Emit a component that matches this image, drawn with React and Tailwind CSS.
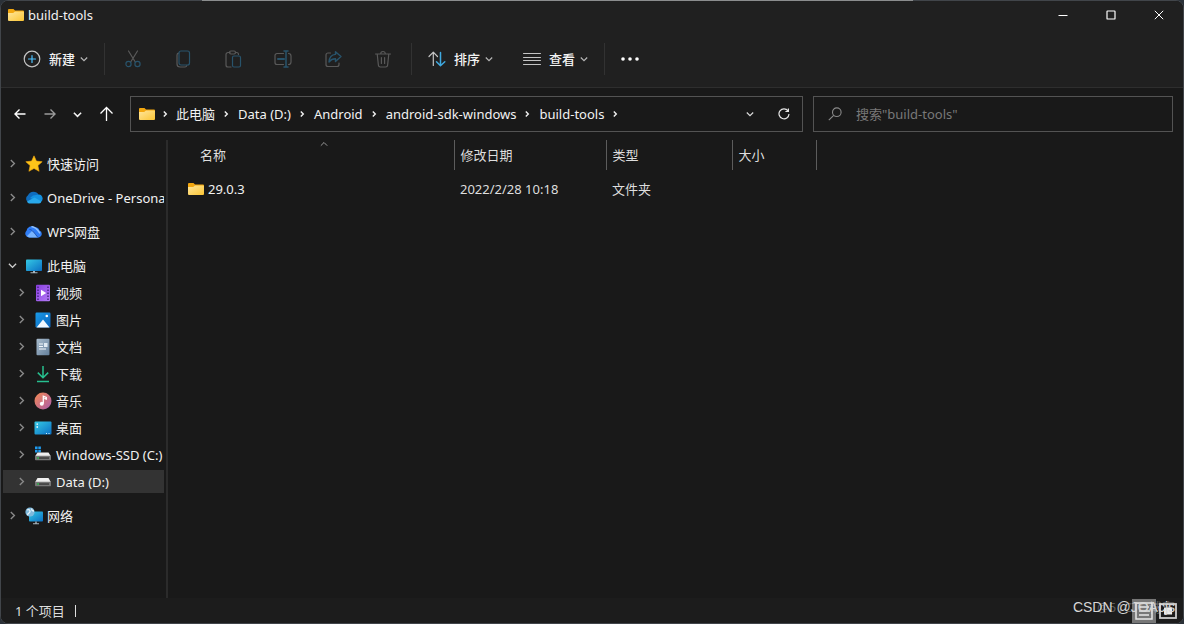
import React from "react";

const Chevron = ({ dir = "right", size = 8, className = "", width = 1.2 }) => {
  const d = {
    right: "M2.5 0.8L5.7 4L2.5 7.2",
    down: "M0.8 2.5L4 5.7L7.2 2.5",
    up: "M0.8 5.7L4 2.5L7.2 5.7",
  }[dir];
  return (
    <svg width={size} height={size} viewBox="0 0 8 8" fill="none" stroke="currentColor" strokeWidth={width} className={`shrink-0 ${className}`} aria-hidden="true">
      <path d={d} />
    </svg>
  );
};

const CrumbArrow = ({ className }) => (
  <svg width="8" height="8" viewBox="0 0 8 8" fill="none" stroke="currentColor" strokeWidth="1.4" className={`shrink-0 ${className}`} aria-hidden="true">
    <path d="M2.8 1.5L5.3 4L2.8 6.500" />
  </svg>
);

const Folder = () => (
  <svg width="16" height="14" viewBox="0 0 16 14" className="shrink-0" aria-hidden="true">
    <defs>
      <linearGradient id="fold" x1="0" y1="0" x2="1" y2="1">
        <stop offset="0" stopColor="#ffe69c" />
        <stop offset="1" stopColor="#fbc534" />
      </linearGradient>
    </defs>
    <path d="M0 2a1 1 0 0 1 1-1h4.5L7 2.5h8a1 1 0 0 1 1 1V6H0z" fill="#f3a70f" />
    <path d="M0 5h5.2L7 3.5h8.2a.8.8 0 0 1 .8.8V12a1 1 0 0 1-1 1H1a1 1 0 0 1-1-1z" fill="url(#fold)" />
  </svg>
);

const Ico = ({ children, size = 18 }) => (
  <svg width={size} height={size} viewBox="0 0 18 18" fill="none" strokeWidth="1.2" strokeLinecap="round" strokeLinejoin="round" className="shrink-0" aria-hidden="true">
    {children}
  </svg>
);

const G = "#595959";
const B = "#28536b";

const tools = [
  ["剪切", <Ico><path stroke={G} d="M4.5 1l6.8 11M13.5 1L6.7 12" /><circle cx="4.5" cy="14" r="2.6" stroke={B} /><circle cx="13.5" cy="14" r="2.6" stroke={B} /></Ico>],
  ["复制", <Ico><path stroke={G} d="M4.5 3.2A2 2 0 0 0 3 5v9a3 3 0 0 0 3 3h5a2 2 0 0 0 1.8-1.4" /><rect x="5" y="1" width="10.5" height="14" rx="2" stroke={B} /></Ico>],
  ["粘贴", <Ico><path stroke={G} d="M6 2.5H4a2 2 0 0 0-2 2V15a2 2 0 0 0 2 2h3M11.5 2.5h1a2 2 0 0 1 2 2" /><rect x="5.5" y="1" width="6" height="3" rx="1.4" stroke={G} /><rect x="8.5" y="6" width="8" height="11" rx="1.5" stroke={B} /></Ico>],
  ["重命名", <Ico><path stroke={G} d="M9.5 3.5H3a2 2 0 0 0-2 2v7a2 2 0 0 0 2 2h6.5M14.5 3.5a2.5 2.5 0 0 1 2.5 2.5v6a2.5 2.5 0 0 1-2.5 2.5" /><path stroke={B} strokeWidth="1.5" d="M12 1v16M10 1h4M10 17h4" /><path stroke={B} strokeWidth="2" d="M4 9h6" /></Ico>],
  ["共享", <Ico><path stroke={G} d="M6.5 3H4a2 2 0 0 0-2 2v9.500a2 2 0 0 0 2 2h9a2 2 0 0 0 2-2V13" /><path stroke={B} strokeWidth="1.4" d="M11.500 1.700l5.500 4.900-5.500 4.900V8.800C8.200 8.800 6.500 10 5 12c.3-4 2.500-7.300 6.500-7.600z" /></Ico>],
  ["删除", <Ico><path stroke={G} d="M1.500 4h15M6.700 3.800a2.300 2.300 0 0 1 4.600 0M3.200 4l1.200 11.300A1.900 1.900 0 0 0 6.300 17h5.400a1.900 1.900 0 0 0 1.900-1.700L14.800 4M7.400 7.500v6M10.600 7.500v6" /></Ico>],
];

const icons = {
  star: <path d="M9 .8l2.400 5.300 5.800.6-4.300 3.900 1.200 5.700L9 13.400l-5.100 2.900 1.200-5.700L.8 6.700l5.800-.6z" fill="#fcc419" stroke="#f3a70f" strokeWidth=".6" />,
  onedrive: (
    <>
      <path d="M4 13.500A4 4 0 0 1 3 6.200 6 6 0 0 1 13.700 6a4 4 0 0 1 .5 7.500z" fill="#0f6cbd" />
      <path d="M8 6.500l6-1a4 4 0 0 1 1.500 7.500L5 9z" fill="#1490df" />
      <path d="M2 12.500L9.500 8.500l7 4a3 3 0 0 1-2.500 2H4a3 3 0 0 1-2-2z" fill="#28a8ea" />
    </>
  ),
  wps: (
    <>
      <path d="M4 14.500A3.900 3.900 0 0 1 1.500 7.800 5 5 0 0 1 9.500 4.200 4.800 4.800 0 0 1 14.500 7.500 3.700 3.700 0 0 1 14 14.500z" fill="#2f7df6" />
      <path d="M2 13l5.500-5.500 5.500 7H4.500a3 3 0 0 1-2.500-1.500z" fill="#78b4ff" />
      <path d="M6.500 3.800c3-.6 5.500 2 8.500 6.500" fill="none" stroke="#8fc1ff" strokeWidth="1.500" />
      <path d="M4.500 6.500c3 0 5 4 8.500 8" fill="none" stroke="#1c4fae" strokeWidth="1" />
    </>
  ),
  pc: (
    <>
      <rect x="1" y="2.500" width="16" height="11.500" rx=".8" fill="url(#cyan)" />
      <path d="M8 14h2v1.500H8zM5.500 15.300h7v1h-7z" fill="#a9b6bf" />
    </>
  ),
  video: (
    <>
      <rect x="2" y=".8" width="14" height="16.400" rx="1" fill="url(#violet)" />
      <path d="M4 2.500v14M14 2.500v14" stroke="#42207c" strokeWidth="1.400" strokeDasharray="1.400 1.600" />
      <path d="M7 5.800v6.400L12.200 9z" fill="#fff" />
    </>
  ),
  picture: (
    <>
      <rect x="1.500" y="1.500" width="15" height="15" rx="1.200" fill="url(#blue)" />
      <path d="M2.500 16.500L9 8.500l6.500 8z" fill="#f1f8ff" />
      <circle cx="12.800" cy="5" r="1.300" fill="#fff" />
    </>
  ),
  doc: (
    <>
      <rect x="2.500" y=".8" width="13" height="16.400" rx="1" fill="url(#slate)" />
      <path d="M5 6h4M5 8.500h4M5 11h7" stroke="#f3f7fb" strokeWidth="1.100" />
      <rect x="10" y="5" width="3.500" height="4" fill="#dfe9f2" />
    </>
  ),
  download: <path d="M9 1v11.500M3.800 7.600L9 12.800l5.200-5.200M3 16.500h12" fill="none" stroke="#27c08f" strokeWidth="1.500" />,
  music: (
    <>
      <circle cx="9" cy="9" r="8.500" fill="url(#rose)" />
      <path d="M9.300 11.500V4.200l3 1.200v1.700l-2-.7" fill="none" stroke="#fff" strokeWidth="1.300" />
      <circle cx="7.800" cy="11.700" r="2" fill="#fff" />
    </>
  ),
  desktop: (
    <>
      <rect x=".5" y="2.500" width="17" height="13" rx="1" fill="url(#cyan)" />
      <path d="M2.500 5.200h1.500M2.500 8h1.500" stroke="#fff" strokeWidth="1.300" />
      <path d="M12 14.500h1M14.500 14.500h1" stroke="#d5f3ff" strokeWidth="1" />
    </>
  ),
  ssd: (
    <>
      <path d="M1 .5h2.600v2.600H1zM4.300.5h2.600v2.600H4.300zM1 3.800h2.600v2.600H1zM4.300 3.800h2.600v2.600H4.300z" fill="#1e9bf0" />
      <path d="M3.500 6.500h11l2.500 4H1z" fill="#efefef" />
      <rect x="1" y="9.800" width="16" height="4.400" rx=".8" fill="#777" />
      <rect x="3" y="11.300" width="12" height="1.500" fill="#3d3d3d" />
      <path d="M3.300 12h1.500" stroke="#35e05b" strokeWidth="1.400" />
    </>
  ),
  drive: (
    <>
      <path d="M3.500 5h11l2.500 4.500H1z" fill="#efefef" />
      <rect x="1" y="8.800" width="16" height="4.400" rx=".8" fill="#777" />
      <rect x="3" y="10.300" width="12" height="1.500" fill="#3d3d3d" />
      <path d="M3.300 11h1.500" stroke="#35e05b" strokeWidth="1.400" />
    </>
  ),
  network: (
    <>
      <rect x="4" y="4.500" width="14" height="10" rx=".8" fill="url(#cyan)" />
      <path d="M10.300 14.500h1.400v2h-1.400zM8 16.300h6v1H8z" fill="#a9b6bf" />
      <circle cx="5" cy="5" r="4.600" fill="#7fb9dc" />
      <path d="M2 3c2-1 3 0 3 1.500S3 6 2.500 8M7 1.500C6 3 7.500 4 9 4" fill="none" stroke="#e6f4fb" strokeWidth="1.300" />
    </>
  ),
};

const Gradients = () => (
  <svg width="0" height="0" className="absolute" aria-hidden="true">
    <defs>
      {[
        ["cyan", "#35c9e4", "#0b6fc4"],
        ["violet", "#8a3fe0", "#b37af5"],
        ["blue", "#1a9be8", "#0b64bd"],
        ["slate", "#a9bccd", "#64809c"],
        ["rose", "#f58a52", "#a95cab"],
      ].map(([id, a, b]) => (
        <linearGradient key={id} id={id} x1="0" y1="0" x2="1" y2="1">
          <stop offset="0" stopColor={a} />
          <stop offset="1" stopColor={b} />
        </linearGradient>
      ))}
    </defs>
  </svg>
);

const TreeRow = ({ icon, label, open, child, selected }) => (
  <a
    href="#"
    className={`flex h-[23px] items-center overflow-hidden whitespace-nowrap ${child ? "pl-3.5" : "pl-[5px]"} ${selected ? "bg-[#333333]" : ""}`}
  >
    <Chevron dir={open ? "down" : "right"} size={9} className={`mr-2 ${open ? "text-[#d0d0d0]" : "text-[#8a8a8a]"}`} />
    <svg width="18" height="18" viewBox="0 0 18 18" className="mr-1 shrink-0" aria-hidden="true">{icons[icon]}</svg>
    <span>{label}</span>
  </a>
);

const children = [
  ["video", "视频"],
  ["picture", "图片"],
  ["doc", "文档"],
  ["download", "下载"],
  ["music", "音乐"],
  ["desktop", "桌面"],
  ["ssd", "Windows-SSD (C:)"],
  ["drive", "Data (D:)"],
];

const crumbs = ["此电脑", "Data (D:)", "Android", "android-sdk-windows", "build-tools"];

const Divider = () => <div className="h-8 w-px shrink-0 bg-[#323232]" />;

export default function App() {
  return (
    <div className="min-h-screen bg-[#2b3138] font-['Noto_Sans','Noto_Sans_CJK_SC',sans-serif] text-[13px] leading-5 text-[#f2f2f2]">
      <Gradients />
      <div className="relative flex min-h-screen flex-col overflow-hidden rounded-lg border border-[#41454a] bg-[#191919]">
        <header className="bg-[#202020]">
          <div className="flex h-7 items-center pl-[7px]">
            <Folder />
            <h1 className="ml-1 flex-1">build-tools</h1>
            <div className="flex">
              <button aria-label="最小化" className="flex h-7 w-12 items-center justify-center">
                <svg width="10" height="10" viewBox="0 0 10 10" stroke="#fff" aria-hidden="true"><path d="M0.500 5.500h9" /></svg>
              </button>
              <button aria-label="最大化" className="flex h-7 w-12 items-center justify-center">
                <svg width="10" height="10" viewBox="0 0 10 10" stroke="#fff" fill="none" aria-hidden="true"><rect x="1" y="1" width="8" height="8" rx=".6" strokeWidth="1.200" /></svg>
              </button>
              <button aria-label="关闭" className="flex h-7 w-12 items-center justify-center">
                <svg width="10" height="10" viewBox="0 0 10 10" stroke="#fff" aria-hidden="true"><path d="M.8.8l8.400 8.400M9.200.8L.8 9.200" /></svg>
              </button>
            </div>
          </div>
          <div className="flex h-[59px] items-center border-b border-[#2e2e2e] pl-[22px] pt-0.5 font-medium">
            <button className="mr-4 flex items-center">
              <Ico><circle cx="9" cy="9" r="7.800" stroke="#c4c4c4" /><path stroke="#4cc2ff" d="M9 5.500v7M5.500 9h7" /></Ico>
              <span className="ml-2 mr-[5px]">新建</span>
              <Chevron dir="down" className="text-[#b5b5b5]" />
            </button>
            <Divider />
            <div className="mx-[3px] flex">
              {tools.map(([name, icon]) => (
                <button key={name} aria-label={name} disabled className="flex h-8 w-[50px] items-center justify-center">
                  {icon}
                </button>
              ))}
            </div>
            <Divider />
            <button className="ml-4 flex items-center">
              <Ico><path stroke="#c4c4c4" d="M5.300 15.500V2.500M1 6.500l4.300-4.300 4.200 4.300" /><path stroke="#3fa9e0" strokeWidth="1.500" d="M12.500 2.500v13M8.500 11.700l4 4 4.300-4" /></Ico>
              <span className="ml-2 mr-[5px]">排序</span>
              <Chevron dir="down" className="text-[#b5b5b5]" />
            </button>
            <button className="ml-[30px] mr-4 flex items-center">
              <Ico><path stroke="#c4c4c4" strokeWidth="1" d="M.5 3.500h17M.5 7.500h17M.5 10.500h17M.5 14.500h17" /></Ico>
              <span className="ml-2 mr-[5px]">查看</span>
              <Chevron dir="down" className="text-[#b5b5b5]" />
            </button>
            <Divider />
            <button aria-label="更多" className="ml-4 flex h-8 items-center">
              <svg width="18" height="4" viewBox="0 0 18 4" fill="#fff" aria-hidden="true"><circle cx="2" cy="2" r="1.800" /><circle cx="9" cy="2" r="1.800" /><circle cx="16" cy="2" r="1.800" /></svg>
            </button>
          </div>
        </header>

        <div className="flex items-center gap-2.5 pb-2 pl-3 pr-2.5 pt-2">
          <nav className="mr-1.5 flex items-center">
            <button aria-label="后退" className="mr-4">
              <svg width="14" height="14" viewBox="0 0 14 14" fill="none" stroke="#fff" strokeWidth="1.400" aria-hidden="true"><path d="M12.500 7H2M6.500 2.500L2 7l4.500 4.500" /></svg>
            </button>
            <button aria-label="前进" className="mr-4">
              <svg width="14" height="14" viewBox="0 0 14 14" fill="none" stroke="#9b9b9b" strokeWidth="1.400" aria-hidden="true"><path d="M1.500 7H12M7.500 2.500L12 7l-4.500 4.500" /></svg>
            </button>
            <button aria-label="最近位置" className="mr-4">
              <Chevron dir="down" size={9} width={1.4} />
            </button>
            <button aria-label="向上">
              <svg width="16" height="16" viewBox="0 0 16 16" fill="none" stroke="#fff" strokeWidth="1.300" aria-hidden="true"><path d="M8.500 15V1.500M2.500 7.500l6-6 6 6" /></svg>
            </button>
          </nav>
          <div className="flex h-9 min-w-0 flex-1 items-center border border-[#535353] pl-2 pr-3">
            <Folder />
            <div className="flex flex-1 items-center whitespace-nowrap">
              {crumbs.map((c) => (
                <React.Fragment key={c}>
                  <CrumbArrow className="ml-1.5 mr-2 first:mr-[7px]" />
                  <a href="#" className="mr-px">{c}</a>
                </React.Fragment>
              ))}
              <CrumbArrow className="ml-1.5" />
            </div>
            <button aria-label="历史记录" className="mr-6">
              <Chevron dir="down" className="text-[#dadada]" />
            </button>
            <button aria-label="刷新">
              <svg width="12" height="12" viewBox="0 0 12 12" fill="none" stroke="#e6e6e6" strokeWidth="1.200" aria-hidden="true"><path d="M10 2.800A5 5 0 1 0 11 6M10.400 .5v3H7.400" /></svg>
            </button>
          </div>
          <label className="flex h-9 w-[360px] items-center border border-[#535353] pl-3.5">
            <svg width="14" height="14" viewBox="0 0 14 14" fill="none" stroke="#8a8a8a" strokeWidth="1.100" aria-hidden="true"><circle cx="8.800" cy="5.200" r="4.300" /><path d="M5.700 8.300L.8 13.200" /></svg>
            <input type="search" aria-label="搜索" placeholder={'搜索"build-tools"'} className="ml-3.5 min-w-0 flex-1 bg-transparent outline-none placeholder:text-[#787878]" />
          </label>
        </div>

        <main className="flex flex-1">
          <aside className="w-[167px] shrink-0 border-r-2 border-[#2b2b2b] pl-0.5 pr-0.5 pt-3">
            <ul className="flex flex-col gap-[11px] overflow-hidden">
              <li><TreeRow icon="star" label="快速访问" /></li>
              <li><TreeRow icon="onedrive" label="OneDrive - Personal" /></li>
              <li><TreeRow icon="wps" label="WPS网盘" /></li>
              <li>
                <TreeRow icon="pc" label="此电脑" open />
                <ul className="mt-1 flex flex-col gap-1">
                  {children.map(([icon, label]) => (
                    <li key={label}><TreeRow icon={icon} label={label} child selected={icon === "drive"} /></li>
                  ))}
                </ul>
              </li>
              <li><TreeRow icon="network" label="网络" /></li>
            </ul>
          </aside>
          <section className="min-w-0 flex-1">
            <table className="w-[648px] table-fixed border-collapse text-left text-[#dedede]">
              <colgroup>
                <col className="w-[286px]" />
                <col className="w-[152px]" />
                <col className="w-[126px]" />
                <col className="w-[84px]" />
              </colgroup>
              <thead>
                <tr className="h-[30px]">
                  <th className="relative border-r border-[#5c5c5c] pl-8 font-normal">
                    名称
                    <Chevron dir="up" width={0.9} className="absolute left-[152px] top-0 text-[#a8a8a8]" />
                  </th>
                  <th className="border-r border-[#5c5c5c] pl-1.5 font-normal">修改日期</th>
                  <th className="border-r border-[#5c5c5c] pl-1.5 font-normal">类型</th>
                  <th className="border-r border-[#5c5c5c] pl-1.5 font-normal">大小</th>
                </tr>
              </thead>
              <tbody>
                <tr className="h-[38px]">
                  <td className="pl-5 text-[#f2f2f2]">
                    <span className="flex items-center gap-1"><Folder />29.0.3</span>
                  </td>
                  <td className="pl-1.5">2022/2/28 10:18</td>
                  <td className="pl-1.5">文件夹</td>
                  <td />
                </tr>
              </tbody>
            </table>
          </section>
        </main>

        <footer className="flex h-[25px] items-center bg-[#1c1c1c] pl-3.5 pr-[3px] text-[#dedede]">
          <span>1 个项目</span>
          <div className="ml-2.5 h-3 w-px bg-[#dedede]" />
          <div className="ml-auto flex items-center">
            <button aria-label="详细信息" className="flex h-6 w-6 items-center justify-center bg-[#777777]">
              <svg width="18" height="18" viewBox="0 0 18 18" fill="none" stroke="#e8e8e8" strokeWidth="1.500" aria-hidden="true"><rect x="1" y="1" width="16" height="16" /><path d="M4 5h10M4 9h10M4 13h10" /></svg>
            </button>
            <button aria-label="大图标" className="flex h-6 w-6 items-center justify-center">
              <svg width="18" height="16" viewBox="0 0 18 16" fill="none" stroke="#cfcfcf" strokeWidth="1.800" aria-hidden="true"><rect x="1" y="1" width="16" height="14" /><rect x="5" y="4.500" width="8" height="7" fill="#e8e8e8" stroke="none" /></svg>
            </button>
          </div>
        </footer>
        <span className="absolute bottom-1.5 right-2 text-[13px] text-white/30">@51CTO博客</span>
        <span className="absolute bottom-1.5 right-2 font-['Liberation_Sans',sans-serif] text-sm text-[#d6d6d6]">CSDN @JOAcjs</span>
      </div>
      <div className="absolute left-[202px] right-[271px] top-0 h-px bg-[#8b8d8e]" />
    </div>
  );
}
